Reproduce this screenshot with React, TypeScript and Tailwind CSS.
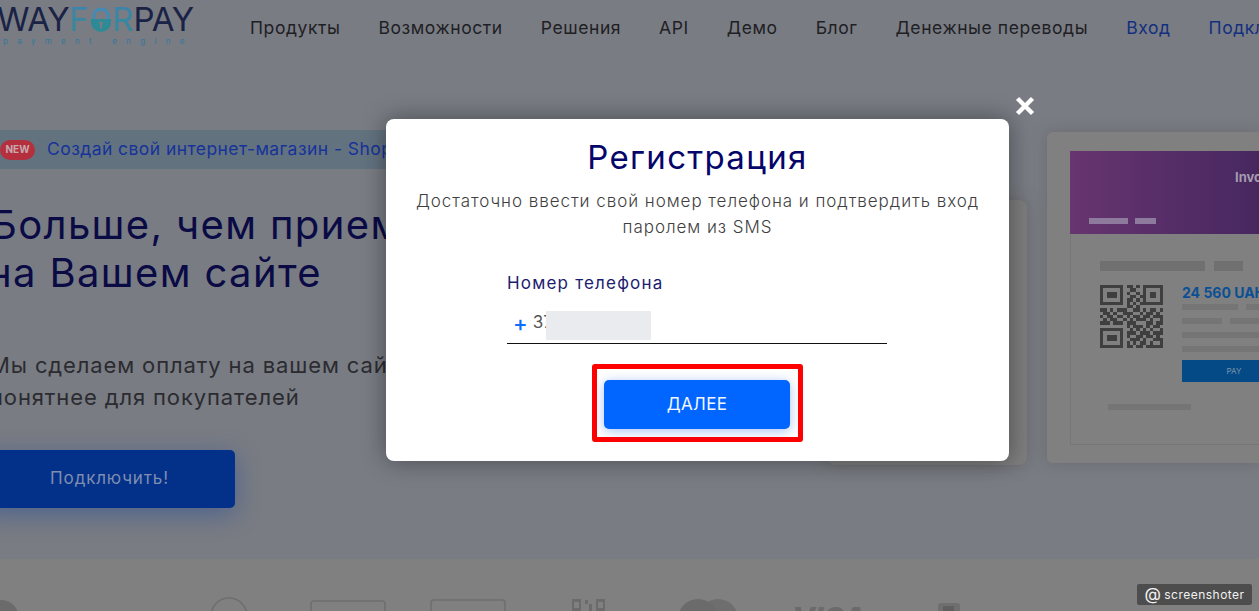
const F = "font-['Inter','Noto_Sans',sans-serif]";

function Qr() {
  const rows = [
    "1111111011010111111",
    "1000001001100100001",
    "1011101010010101101",
    "1011101001101101101",
    "1000001011010100001",
    "1111111010101111111",
    "0000000011010000000",
    "1101011100110101101",
    "0110100111001011010",
    "1011011010110110111",
    "0101100101011101001",
    "1110111011100011011",
    "0000000010111010110",
    "1111111001010101001",
    "1000001011101110111",
    "1011101010011011010",
    "1011101001110100111",
    "1000001010101101001",
    "1111111011011011111",
  ];
  return (
    <svg className="shrink-0" width="63" height="63" viewBox="0 0 19 19" shapeRendering="crispEdges">
      {rows.map((r, y) =>
        r.split("").map((c, x) => (c === "1" ? <rect key={`${x}-${y}`} x={x} y={y} width="1" height="1" fill="#3f3f3f" /> : null)),
      )}
    </svg>
  );
}

function Lock() {
  return (
    <svg width="24" height="27" viewBox="0 0 25 27" className="shrink-0">
      <path d="M5 14V10a7.5 7.5 0 0 1 15 0v4" fill="none" stroke="#3f8cbb" strokeWidth="3" />
      <path d="M2 13h21v3a10.5 10.5 0 0 1-21 0z" fill="#2f8a98" />
      <circle cx="12.5" cy="17.5" r="2" fill="#797c83" />
      <rect x="11.5" y="18" width="2" height="5" fill="#797c83" />
    </svg>
  );
}

function Bar({ w, c = "bg-[#757575]", h = "h-[6px]" }: { w: string; c?: string; h?: string }) {
  return <div className={`${w} ${h} ${c} shrink-0`} />;
}

export default function App() {
  return (
    <div className={`${F} relative flex h-[611px] w-full flex-col overflow-hidden bg-[#797c83]`}>
      <header className="flex h-[55px] shrink-0 items-start">
        <div className="ml-[-3px] w-[253px] shrink-0 pt-[1px]">
          <div className="flex h-[36px] items-center text-[33px] leading-none font-normal tracking-[-0.01em] text-[#1a2246]">
            <span>WAY</span>
            <span className="flex items-center">
              <span className="bg-gradient-to-b from-[#3c84b0] to-[#2f8a95] bg-clip-text text-transparent">F</span>
              <Lock />
              <span className="bg-gradient-to-b from-[#3c84b0] to-[#2f8a95] bg-clip-text text-transparent">R</span>
            </span>
            <span>PAY</span>
          </div>
          <div className="mt-[-1px] pl-[6px] text-[8px] leading-[10px] tracking-[1.16em] whitespace-nowrap text-[#34789c]">payment engine</div>
        </div>
        <nav className="flex h-[56px] items-center gap-[38px] text-[17.5px] tracking-[0.033em] whitespace-nowrap text-[#1f2024]">
          <span>Продукты</span>
          <span>Возможности</span>
          <span>Решения</span>
          <span>API</span>
          <span>Демо</span>
          <span>Блог</span>
          <span>Денежные переводы</span>
          <span className="text-[#12307f]">Вход</span>
          <span className="text-[#12307f]">Подключить</span>
        </nav>
      </header>

      <main className="flex min-h-0 flex-1 justify-between pt-[75px]">
        <section className="w-[390px] shrink-0">
          <div className="flex h-[39px] w-[420px] items-center bg-[#62727f]">
            <span className="flex h-[20px] w-[35px] items-center justify-center rounded-full bg-[#b5303f] text-[10px] font-bold text-[#c9a9ad]">NEW</span>
            <span className="ml-[12px] text-[17.5px] tracking-[0.025em] whitespace-nowrap text-[#17339a]">Создай свой интернет-магазин - Shop</span>
          </div>
          <h1 className="mt-[32px] ml-[-9px] text-[40px] leading-[48px] font-normal tracking-[0.034em] whitespace-nowrap text-[#0a0a45]">
            Больше, чем прием платежей
            <br />
            <span className="ml-[-3px]">на Вашем сайте</span>
          </h1>
          <p className="mt-[52px] ml-[-10px] text-[22px] leading-[32px] tracking-[0.04em] whitespace-nowrap text-[#2b2b30]">
            Мы сделаем оплату на вашем сайте
            <br />
            понятнее для покупателей
          </p>
          <div className="mt-[37px] ml-[-20px] flex h-[58px] w-[255px] items-center justify-center rounded-[5px] bg-[#03318a] pl-[4px] text-[17px] tracking-[0.05em] text-[#7f8db0] shadow-[0_6px_26px_rgba(10,60,160,0.4)]">
            Подключить!
          </div>
        </section>

        <section className="flex items-start gap-[20px]">
          <div className="mt-[70px] h-[265px] w-[200px] rounded-[8px] bg-[#7d7d7d] shadow-[0_0_14px_rgba(90,90,90,0.5)]" />
          <div className="mt-[2px] flex h-[331px] w-[212px] flex-col rounded-l-[6px] bg-[#808080] pt-[19px] pb-[18px] pl-[23px] shadow-[0_0_14px_rgba(90,90,90,0.5)]">
            <div className="flex h-[83px] shrink-0 flex-col justify-between bg-gradient-to-r from-[#673570] to-[#47275f] pt-[18px] pb-[10px]">
              <div className="pl-[165px] text-[13px] leading-4 font-bold whitespace-nowrap text-[#a59bb0]">Invoice</div>
              <div className="flex gap-[7px] pl-[19px]">
                <Bar w="w-[39px]" c="bg-[#8d7a9c]" />
                <Bar w="w-[21px]" c="bg-[#8d7a9c]" />
              </div>
            </div>
            <div className="flex-1 border-b border-l border-[#777777] pt-[27px] pl-[29px]">
              <div className="flex gap-[9px]">
                <Bar w="w-[105px]" c="bg-[#707070]" h="h-[10px]" />
                <Bar w="w-[29px]" c="bg-[#707070]" h="h-[10px]" />
              </div>
              <div className="mt-[14px] flex gap-[19px]">
                <Qr />
                <div className="flex w-[77px] flex-col">
                  <div className="text-[14px] leading-[16px] font-bold whitespace-nowrap text-[#0b4f95]">24 560 UAH</div>
                  <div className="mt-[3px] flex gap-[8px]">
                    <Bar w="w-[56px]" />
                    <Bar w="w-[40px]" />
                  </div>
                  <div className="mt-[8px] flex gap-[8px]">
                    <Bar w="w-[40px]" />
                    <Bar w="w-[60px]" />
                  </div>
                  <div className="mt-[8px]"><Bar w="w-[100px]" /></div>
                  <div className="mt-[8px]"><Bar w="w-[100px]" /></div>
                  <div className="mt-[8px] flex h-[22px] w-[104px] shrink-0 items-center justify-center bg-[#034a86] text-[8px] text-[#7f94aa]">PAY</div>
                </div>
              </div>
              <div className="mt-[22px] ml-[8px]"><Bar w="w-[83px]" /></div>
            </div>
          </div>
        </section>
      </main>

      <footer className="relative h-[52px] shrink-0 overflow-hidden bg-[#808080]">
        <svg className="h-full w-full" viewBox="0 0 1259 52" preserveAspectRatio="none">
          <g fill="none" stroke="#6e6e6e" strokeWidth="1.5">
            <circle cx="229" cy="57" r="18" />
            <rect x="311" y="42" width="74" height="30" rx="3" />
            <rect x="431" y="41" width="74" height="30" rx="3" />
          </g>
          <g fill="#6b6b6b">
            <circle cx="1" cy="59" r="18" />
            <path fillRule="evenodd" d="M572 40h9v12h-9zM574 43v6h5v-6zM596 40h9v12h-9zM598 43v6h5v-6z" />
            <rect x="585" y="41" width="3" height="4" />
            <rect x="589" y="45" width="3" height="7" />
            <circle cx="698" cy="60" r="20" />
            <circle cx="718" cy="60" r="20" fillOpacity="0.9" />
            <path d="M938 52v-5a3 3 0 0 1 3-3h16a3 3 0 0 1 3 3v5z" fill="#6f6f6f" />
            <rect x="943" y="47" width="11" height="5" fill="#5f5f5f" />
          </g>
        </svg>
        <span className="absolute top-[44px] left-[792px] text-[30px] leading-none font-extrabold text-[#6b6b6b] italic">VISA</span>
      </footer>

      <div className="absolute top-[584px] left-[1137px] flex h-[21px] w-[115px] items-center justify-center gap-[3px] rounded-[2px] bg-[#4d4d4d] text-[12px] leading-none tracking-[0.04em] text-[#f2f2f2]">
        <span className="text-[17px] leading-none">@</span>
        <span>screenshoter</span>
      </div>

      <div className="absolute top-[119px] left-[386px] flex h-[342px] w-[623px] flex-col items-center rounded-[8px] bg-white pt-[18px] shadow-[0_0_24px_rgba(0,0,0,0.4)]">
        <svg className="absolute top-[-24px] right-[-27px]" width="22" height="22" viewBox="0 0 22 22">
          <path d="M3.5 3.5l15 15M18.5 3.5l-15 15" stroke="#ffffff" strokeWidth="4.4" />
        </svg>
        <h2 className="text-[33px] leading-[40px] font-normal tracking-[0.04em] text-[#05056a]">Регистрация</h2>
        <p className="mt-[11px] w-[580px] text-center text-[17px] leading-[26px] font-light tracking-[0.056em] text-[#3f3f3f]">
          Достаточно ввести свой номер телефона и подтвердить вход паролем из SMS
        </p>
        <div className="mt-[31px] ml-[-1px] w-[380px]">
          <div className="text-[17px] leading-[24px] tracking-[0.07em] text-[#1c1c70]">Номер телефона</div>
          <div className="relative mt-[11px] flex h-[38px] items-center border-b border-[#111111] pb-[4px] pl-[6px] text-[17px]">
            <span className="text-[22px] leading-none font-medium text-[#0d6efd]">+</span>
            <span className="ml-[5px] text-[#555555]">37</span>
            <div className="absolute top-[5px] left-[39px] h-[29px] w-[105px] bg-[#e9ebee] blur-[0.5px]" />
          </div>
        </div>
        <div className="mt-[20px] flex h-[78px] w-[211px] items-start rounded-[3px] border-[5px] border-[#ff0000] pt-[11px] pl-[7px]">
          <button className="flex h-[49px] w-[186px] items-center justify-center rounded-[5px] bg-[#0066ff] text-[17px] tracking-[0.02em] text-[#f4f7ff] shadow-[0_2px_12px_rgba(0,80,220,0.35)]">
            ДАЛЕЕ
          </button>
        </div>
      </div>
    </div>
  );
}
